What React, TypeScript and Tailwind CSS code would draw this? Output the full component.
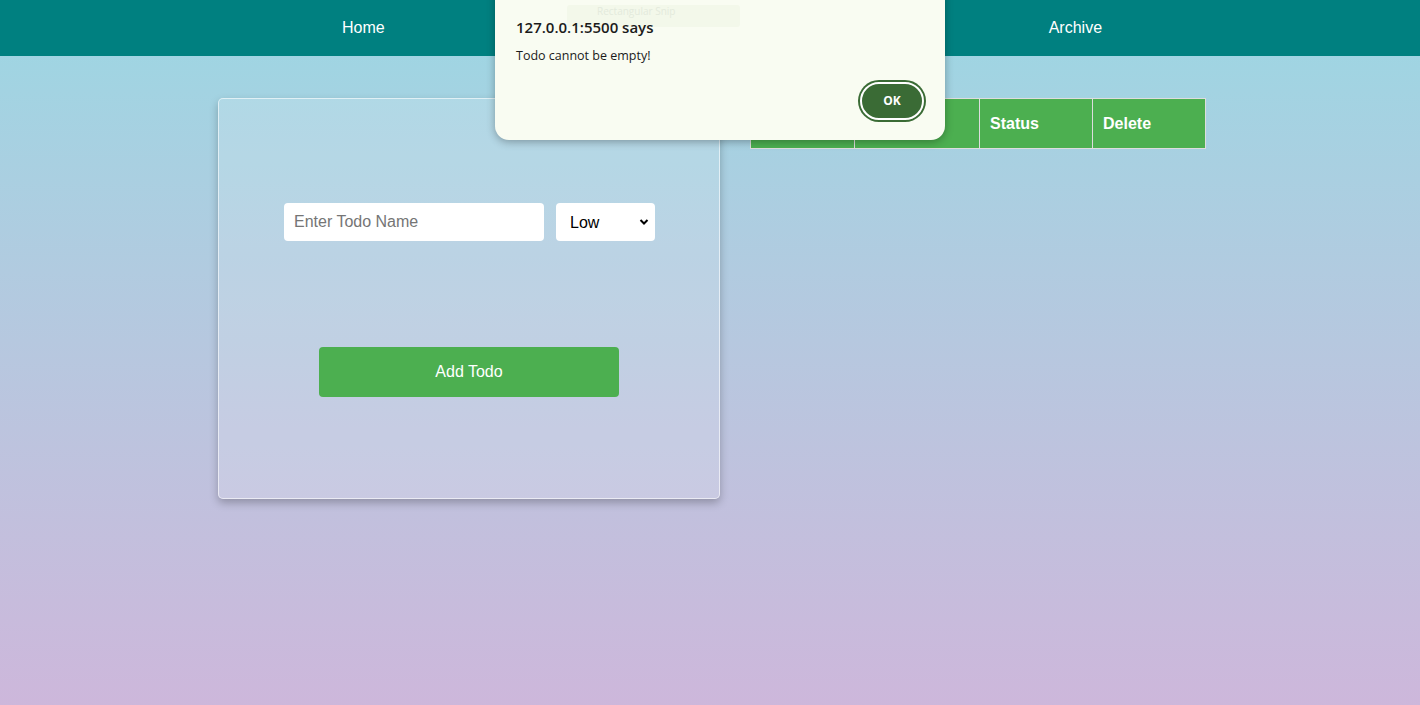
import React from "react";

const App = () => {
  return (
    <div
      className="relative min-h-[705px] w-full overflow-hidden bg-gradient-to-b from-[#9bd7e3] to-[#cdb7db]"
      style={{ fontFamily: '"Liberation Sans", Arial, sans-serif' }}
    >
      {/* Nav */}
      <nav className="flex h-[56px] items-center bg-[#008080] pb-[1px] text-[16px] text-white">
        <a className="ml-[342px]">Home</a>
        <a className="ml-[664px]">Archive</a>
      </nav>

      {/* Main */}
      <main className="flex gap-[30px] pl-[218px] pt-[42px]">
        <div className="flex h-[401px] w-[502px] flex-col items-center rounded-[5px] border border-white/60 bg-white/15 shadow-[0_4px_8px_rgba(0,0,0,0.25)]">
          <div className="mt-[104px] flex gap-[12px] pl-[1px]">
            <input
              className="h-[38px] w-[260px] rounded-[4px] bg-white px-[10px] text-[16px] text-black outline-none placeholder:text-[#757575]"
              placeholder="Enter Todo Name"
            />
            <div className="relative h-[38px] w-[99px] rounded-[4px] bg-white">
              <span className="absolute left-[14px] top-[8px] text-[16px] text-black">Low</span>
              <svg className="absolute right-[6px] top-[15px]" width="10" height="8" viewBox="0 0 10 8">
                <path d="M1.5 2 L5 5.5 L8.5 2" stroke="#000" strokeWidth="2" fill="none" />
              </svg>
            </div>
          </div>
          <button className="mt-[106px] h-[50px] w-[300px] rounded-[4px] bg-[#4caf50] text-[16px] text-white">
            Add Todo
          </button>
        </div>

        <table className="h-[50px] border-collapse self-start text-left text-[16px] font-bold text-white">
          <thead>
            <tr className="bg-[#4caf50]">
              <th className="h-[50px] w-[104px] border border-[#dddddd] px-[10px]">Name</th>
              <th className="w-[125px] border border-[#dddddd] px-[10px]">Priority</th>
              <th className="w-[113px] border border-[#dddddd] px-[10px]">Status</th>
              <th className="w-[113px] border border-[#dddddd] px-[10px]">Delete</th>
            </tr>
          </thead>
        </table>
      </main>

      {/* Alert dialog */}
      <div
        className="absolute left-[495px] top-[-20px] h-[160px] w-[450px] rounded-[14px] bg-[#f9fcf2] shadow-[0_2px_8px_rgba(0,0,0,0.3)]"
        style={{ fontFamily: '"Open Sans", "Noto Sans", sans-serif' }}
      >
        <div className="absolute left-[72px] top-[25px] h-[22px] w-[173px] rounded-[3px] bg-[#f3f8ea]">
          <span className="absolute left-[30px] top-[1px] text-[10px] leading-[10px] text-[#e3eadc]">
            Rectangular Snip
          </span>
        </div>
        <div className="relative pl-[21px] pt-[40px] text-[15px] font-semibold leading-[15px] text-[#1b1b1b]">
          127.0.0.1:5500 says
        </div>
        <div className="pl-[21px] pt-[13px] text-[12.5px] leading-[16px] text-[#1b1b1b]">Todo cannot be empty!</div>
        <button className="absolute left-[365px] top-[102px] h-[38px] w-[64px] rounded-full border-2 border-white bg-[#3a6b35] text-[12px] font-bold text-white ring-2 ring-[#3a6b35]">
          OK
        </button>
      </div>
    </div>
  );
};

export default App;
